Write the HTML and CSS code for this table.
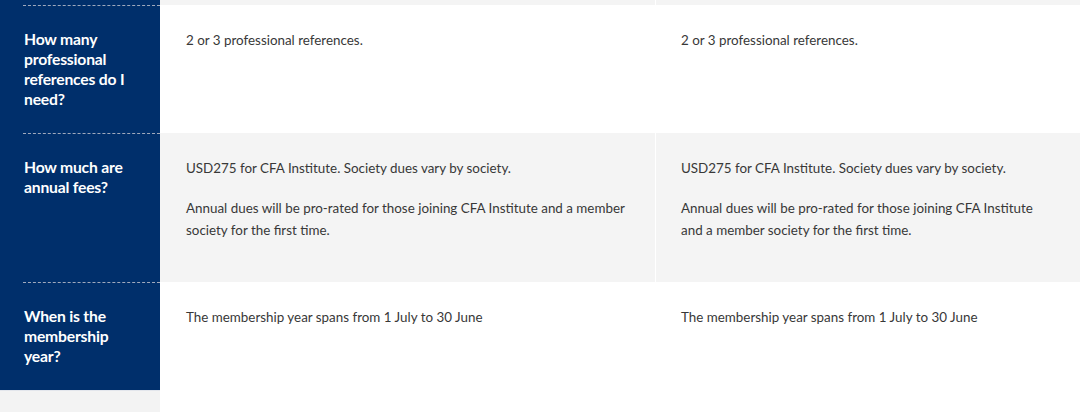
FILE: index.html
```html
<!DOCTYPE html>
<html lang="en">
<head>
<meta charset="utf-8">
<title>Membership comparison</title>
<link rel="stylesheet" href="styles.css">
</head>
<body>
<div class="table">
  <div class="row row-prev">
    <div class="head"></div>
    <div class="cell"></div>
    <div class="cell cell-b"></div>
  </div>

  <div class="row">
    <div class="head"><div class="head-inner">How many professional references do I need?</div></div>
    <div class="cell"><p>2 or 3 professional references.</p></div>
    <div class="cell cell-b"><p>2 or 3 professional references.</p></div>
  </div>

  <div class="row row-alt">
    <div class="head"><div class="head-inner">How much are annual fees?</div></div>
    <div class="cell">
      <p>USD275 for CFA Institute. Society dues vary by society.</p>
      <p>Annual dues will be pro-rated for those joining CFA Institute and a member society for the first time.</p>
    </div>
    <div class="cell cell-b">
      <p>USD275 for CFA Institute. Society dues vary by society.</p>
      <p>Annual dues will be pro-rated for those joining CFA Institute and a member society for the first time.</p>
    </div>
  </div>

  <div class="row">
    <div class="head"><div class="head-inner">When is the membership year?</div></div>
    <div class="cell"><p>The membership year spans from 1 July to 30 June</p></div>
    <div class="cell cell-b"><p>The membership year spans from 1 July to 30 June</p></div>
  </div>

  <div class="row row-foot">
    <div class="head"></div>
    <div class="cell"></div>
    <div class="cell cell-b"></div>
  </div>
</div>
</body>
</html>
```

FILE: styles.css
```css
html, body {
  margin: 0;
  padding: 0;
  background: #ffffff;
}

body {
  font-family: Lato, "Open Sans", Arial, sans-serif;
  color: #383838;
  width: 1080px;
  height: 412px;
  overflow: hidden;
}

.table {
  display: flex;
  flex-direction: column;
}

.row {
  display: grid;
  grid-template-columns: 160px 495px 425px;
  background: #ffffff;
}

.row-alt,
.row-prev {
  background: #f4f4f4;
}

.row-prev {
  height: 5px;
}

.head {
  background: #002f6b;
  padding-left: 23px;
}

.head-inner {
  border-top: 1px dashed #9fa9bd;
  padding: 23px 18px 24px 1px;
  color: #ffffff;
  font-weight: 700;
  font-size: 15.7px;
  line-height: 20px;
  letter-spacing: -0.2px;
}

.cell {
  padding: 24px 26px 23px 26px;
  font-size: 13.4px;
  line-height: 22px;
}

.cell-b {
  border-left: 1px solid #ffffff;
  padding-left: 25px;
}

.cell p {
  margin: 0 0 18px 0;
}

.row-foot {
  height: 22px;
}

.row-foot .head {
  background: #f3f3f3;
  border-top: 1px solid #e3e6ec;
  box-sizing: border-box;
}

.row-foot .cell {
  padding: 0;
}
```
